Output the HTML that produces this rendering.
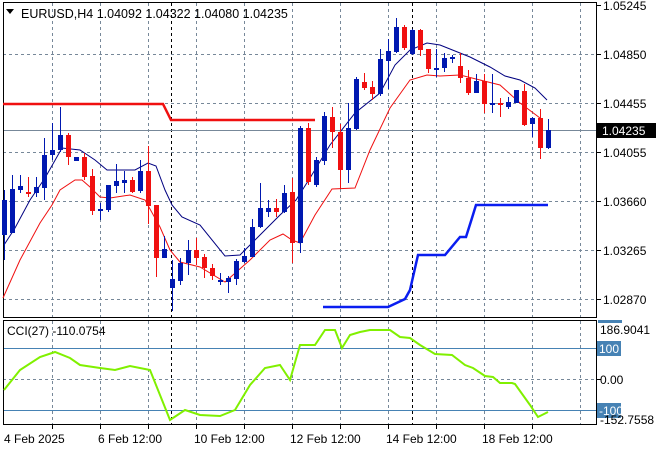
<!DOCTYPE html>
<html><head><style>
html,body{margin:0;padding:0;background:#fff;}
svg{display:block;font-family:"Liberation Sans",sans-serif;}
</style></head><body>
<svg width="660" height="450" viewBox="0 0 660 450" xmlns="http://www.w3.org/2000/svg">
<rect width="660" height="450" fill="#fff"/>
<g stroke="#778899" stroke-width="1" stroke-dasharray="3,3" fill="none">
<path d="M52.5 3V317M100.5 3V317M148.5 3V317M196.5 3V317M244.5 3V317M292.5 3V317M340.5 3V317M388.5 3V317M436.5 3V317M484.5 3V317M532.5 3V317M580.5 3V317"/>
<path d="M52.5 321V424M100.5 321V424M148.5 321V424M196.5 321V424M244.5 321V424M292.5 321V424M340.5 321V424M388.5 321V424M436.5 321V424M484.5 321V424M532.5 321V424M580.5 321V424"/>
<path d="M3 54.5H596M3 103.5H596M3 152.5H596M3 201.5H596M3 250.5H596M3 299.5H596M3 379.5H596"/>
</g>
<g stroke="#000" stroke-dasharray="3,3"><path d="M171.5 3V317M171.5 321V424M412.5 3V317M412.5 321V424"/></g>
<path d="M3 130.5H596" stroke="#778899"/>
<path d="M3 348.5H596M3 410.5H596" stroke="#4682b4"/>
<rect x="3.5" y="2.5" width="593" height="315" fill="none" stroke="#000"/>
<rect x="3.5" y="320.5" width="593" height="104" fill="none" stroke="#000"/>
<g stroke="#000"><path d="M52.5 425v4M148.5 425v4M244.5 425v4M340.5 425v4M436.5 425v4M532.5 425v4M100.5 425v4M196.5 425v4M292.5 425v4M388.5 425v4M484.5 425v4"/>
<path d="M597 5.5h4M597 54.5h4M597 103.5h4M597 152.5h4M597 201.5h4M597 250.5h4M597 299.5h4M597 379.5h4"/></g>
<polyline points="3,104 163,104 171,120 315,120" fill="none" stroke="#f01010" stroke-width="2.5"/>
<polyline points="323,307 388,307 405,299 410,290 418,255 445,255 460,237 466,237 472,218 476,205 548,205" fill="none" stroke="#0a1ef0" stroke-width="2.5"/>
<polyline points="4,245 15,228 30,200 45,178 62,148 80,150 95,160 107,170 135,170 148,163 156,166 165,190 172,205 182,217 200,225 225,256 240,255 255,240 280,215 296,200 310,178 330,145 355,113 380,93 395,65 410,50 427,43 440,45 470,57 490,67 505,76 520,80 535,88 547,100" fill="none" stroke="#000080" stroke-width="1"/>
<polyline points="3,298 20,260 40,223 52,205 60,190 75,180 82,180 90,187 100,197 110,198 130,195 145,200 160,227 170,250 180,262 200,267 225,282 250,260 270,240 283,234 292,240 300,243 315,215 332,189 355,188 370,150 390,108 410,80 427,75 440,76 460,75 480,80 500,85 520,103 540,118" fill="none" stroke="#f01010" stroke-width="1"/>
<g>
<path d="M4.5 190V260M12.5 175V233M20.5 175V193M28.5 177V197M36.5 177V197M44.5 138V200M52.5 123V160M60.5 107V152M100.5 203V220M108.5 185V212M116.5 164V193M124.5 171V193M140.5 160V193M164.5 236V258M172.5 260V311M180.5 258V285M188.5 240V275M220.5 273V285M228.5 276V293M236.5 259V285M244.5 248V263M252.5 219V257M260.5 183V228M268.5 200V217M284.5 185V213M300.5 126V253M316.5 157V187M324.5 112V165M348.5 103V183M356.5 77V130M380.5 49V96M388.5 39V89M396.5 18V53M412.5 29V55M436.5 49V77M444.5 53V72M452.5 55V63M476.5 74V93M492.5 74V113M508.5 97V109M516.5 90V103M532.5 117V137M548.5 119V149" stroke="#0018b0"/>
<path d="M28.5 177V197M68.5 133V165M84.5 153V180M92.5 169V215M132.5 177V193M148.5 146V224M156.5 205V277M196.5 238V265M204.5 254V278M212.5 264V280M276.5 199V217M292.5 178V263M308.5 123V185M332.5 107V148M340.5 124V189M364.5 73V90M372.5 81V100M404.5 25V50M420.5 29V56M428.5 49V73M460.5 53V83M468.5 70V95M484.5 74V113M500.5 98V117M524.5 84V126M540.5 109V159" stroke="#f01010"/>
<g fill="#0018b0">
<rect x="2" y="200" width="5" height="35"/><rect x="10" y="189" width="5" height="44"/><rect x="18" y="186" width="5" height="4"/><rect x="34" y="187" width="5" height="6"/><rect x="42" y="155" width="5" height="33"/><rect x="50" y="150" width="5" height="5"/><rect x="58" y="135" width="5" height="15"/><rect x="74" y="157" width="5" height="4"/><rect x="98" y="209" width="5" height="2"/><rect x="106" y="185" width="5" height="25"/><rect x="114" y="181" width="5" height="5"/><rect x="122" y="180" width="5" height="3"/><rect x="138" y="171" width="5" height="20"/><rect x="162" y="249" width="5" height="9"/><rect x="170" y="279" width="5" height="9"/><rect x="178" y="263" width="5" height="18"/><rect x="186" y="250" width="5" height="13"/><rect x="218" y="280" width="5" height="2"/><rect x="226" y="278" width="5" height="4"/><rect x="234" y="261" width="5" height="18"/><rect x="242" y="256" width="5" height="6"/><rect x="250" y="227" width="5" height="30"/><rect x="258" y="208" width="5" height="19"/><rect x="266" y="208" width="5" height="4"/><rect x="282" y="193" width="5" height="19"/><rect x="298" y="128" width="5" height="115"/><rect x="314" y="160" width="5" height="25"/><rect x="322" y="116" width="5" height="45"/><rect x="346" y="128" width="5" height="42"/><rect x="354" y="79" width="5" height="50"/><rect x="378" y="59" width="5" height="35"/><rect x="386" y="51" width="5" height="10"/><rect x="394" y="27" width="5" height="25"/><rect x="410" y="30" width="5" height="24"/><rect x="434" y="68" width="5" height="2"/><rect x="442" y="58" width="5" height="10"/><rect x="450" y="57" width="5" height="2"/><rect x="474" y="81" width="5" height="12"/><rect x="490" y="103" width="5" height="2"/><rect x="506" y="102" width="5" height="5"/><rect x="514" y="90" width="5" height="13"/><rect x="530" y="118" width="5" height="6"/><rect x="546" y="130" width="5" height="18"/>
</g>
<g fill="#f01010">
<rect x="26" y="192" width="5" height="2"/><rect x="66" y="135" width="5" height="22"/><rect x="82" y="157" width="5" height="20"/><rect x="90" y="176" width="5" height="35"/><rect x="130" y="180" width="5" height="12"/><rect x="146" y="171" width="5" height="35"/><rect x="154" y="205" width="5" height="53"/><rect x="194" y="250" width="5" height="8"/><rect x="202" y="257" width="5" height="11"/><rect x="210" y="268" width="5" height="8"/><rect x="274" y="208" width="5" height="4"/><rect x="290" y="192" width="5" height="51"/><rect x="306" y="128" width="5" height="54"/><rect x="330" y="117" width="5" height="15"/><rect x="338" y="132" width="5" height="38"/><rect x="362" y="82" width="5" height="6"/><rect x="370" y="87" width="5" height="7"/><rect x="402" y="27" width="5" height="21"/><rect x="418" y="30" width="5" height="20"/><rect x="426" y="49" width="5" height="20"/><rect x="458" y="66" width="5" height="12"/><rect x="466" y="78" width="5" height="15"/><rect x="482" y="81" width="5" height="23"/><rect x="498" y="103" width="5" height="2"/><rect x="522" y="91" width="5" height="34"/><rect x="538" y="118" width="5" height="30"/>
</g>
</g>
<polyline points="4,390 20,370 40,357 55,352 70,358 80,365 100,368 115,370 130,366 150,370 160,395 170,420 185,410 200,415 220,416 235,410 250,385 265,368 280,365 290,380 300,345 315,345 325,330 335,330 342,348 350,335 360,332 370,330 390,330 400,337 410,338 420,345 435,354 452,355 465,365 473,368 485,376 493,377 500,383 512,383 515,384 530,405 538,417 548,412" fill="none" stroke="#80f000" stroke-width="2"/>
<path d="M6 9h8l-4 5z" fill="#000"/>
<text x="21" y="18" font-size="12.5" fill="#000">EURUSD,H4  1.04092 1.04322 1.04080 1.04235</text>
<text x="7" y="335" font-size="12" fill="#000">CCI(27) -110.0754</text>
<g font-size="12" fill="#000">
<text x="603" y="10">1.05245</text>
<text x="603" y="59">1.04850</text>
<text x="603" y="108">1.04455</text>
<text x="603" y="157">1.04055</text>
<text x="603" y="206">1.03660</text>
<text x="603" y="255">1.03265</text>
<text x="603" y="304">1.02870</text>
</g>
<rect x="597" y="123" width="59" height="15" fill="#000"/>
<text x="602" y="135" font-size="12" fill="#fff">1.04235</text>
<rect x="598" y="320" width="24" height="3" fill="#4682b4"/>
<text x="600" y="334" font-size="12" fill="#000">186.9041</text>
<rect x="597" y="341" width="24" height="15" fill="#4682b4"/>
<text x="599" y="353" font-size="12" fill="#fff">100</text>
<text x="600" y="384" font-size="12" fill="#000">0.00</text>
<rect x="597" y="403" width="24" height="15" fill="#4682b4"/>
<text x="599" y="415" font-size="12" fill="#fff">-100</text>
<text x="600" y="424" font-size="12" fill="#000">-152.7558</text>
<g font-size="12" fill="#000">
<text x="4" y="443">4 Feb 2025</text>
<text x="98" y="443">6 Feb 12:00</text>
<text x="194" y="443">10 Feb 12:00</text>
<text x="290" y="443">12 Feb 12:00</text>
<text x="386" y="443">14 Feb 12:00</text>
<text x="482" y="443">18 Feb 12:00</text>
</g>
</svg>
</body></html>
